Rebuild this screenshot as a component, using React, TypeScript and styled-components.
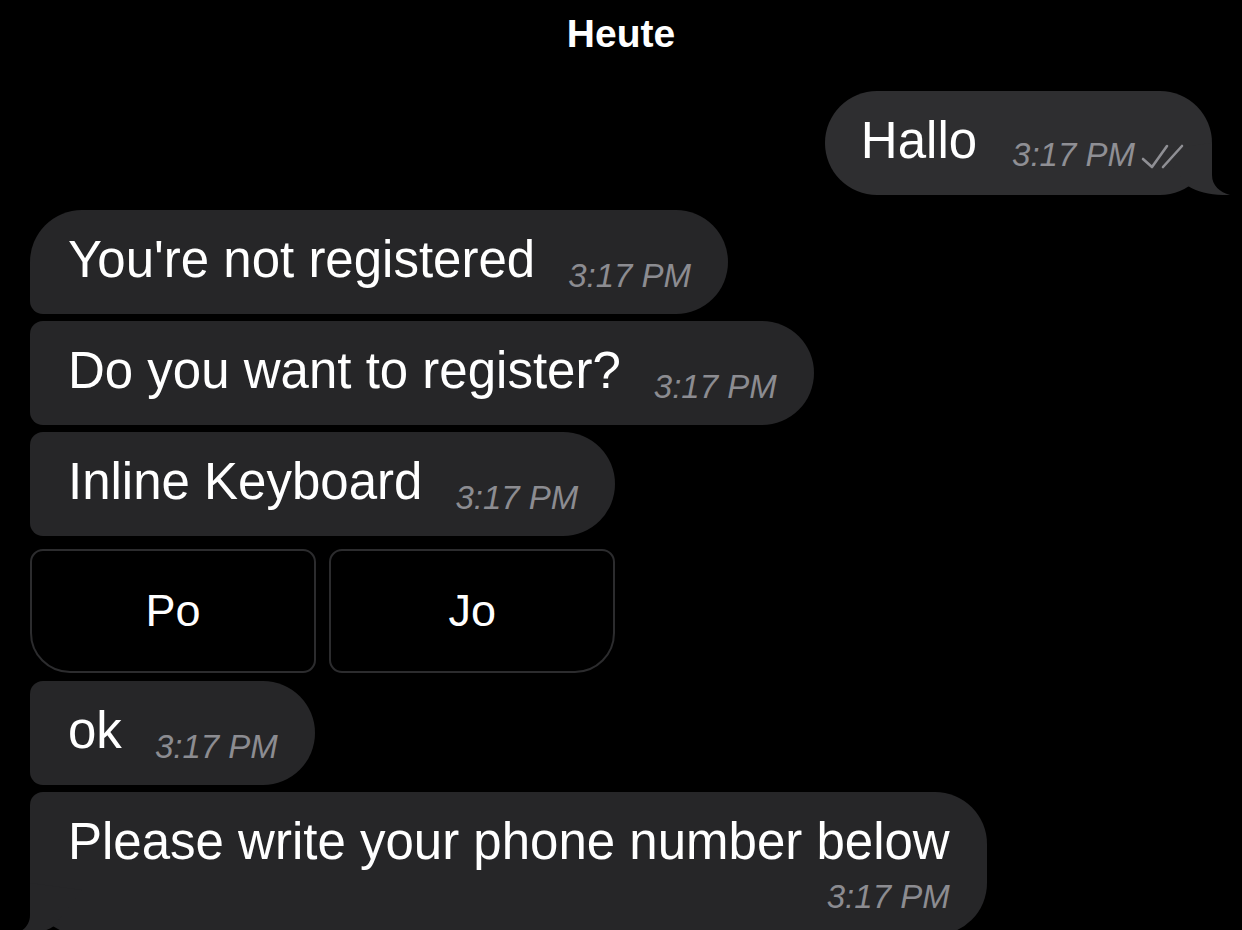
import React from "react";
import styled, { createGlobalStyle } from "styled-components";

const Global = createGlobalStyle`
  html, body {
    margin: 0;
    padding: 0;
    background: #000;
    height: 930px;
    overflow: hidden;
  }
  body {
    font-family: "Liberation Sans", Arial, sans-serif;
    color: #fff;
  }
`;

const IN_BG = "#262628";
const OUT_BG = "#2e2e30";

const Screen = styled.div`
  display: flex;
  flex-direction: column;
  padding: 10px 30px 0 30px;
  height: 930px;
  box-sizing: border-box;
  overflow: hidden;
`;

const DateHeader = styled.div`
  align-self: center;
  font-size: 39px;
  line-height: 47px;
  font-weight: 700;
  color: #fff;
`;

const Bubble = styled.div<{ $out?: boolean; $radius: string; $mt: number; $stacked?: boolean }>`
  position: relative;
  align-self: ${(p) => (p.$out ? "flex-end" : "flex-start")};
  display: flex;
  flex-direction: ${(p) => (p.$stacked ? "column" : "row")};
  align-items: flex-end;
  margin-top: ${(p) => p.$mt}px;
  padding: 20px ${(p) => (p.$out ? 28 : 37)}px ${(p) => (p.$stacked ? 22 : 24)}px
    ${(p) => (p.$out ? 36 : 38)}px;
  background: ${(p) => (p.$out ? OUT_BG : IN_BG)};
  border-radius: ${(p) => p.$radius};
`;

const MsgText = styled.span<{ $stacked?: boolean }>`
  position: relative;
  z-index: 1;
  font-size: 51px;
  line-height: 60px;
  white-space: nowrap;
  align-self: ${(p) => (p.$stacked ? "flex-start" : "auto")};
`;

const Time = styled.span<{ $out?: boolean; $stacked?: boolean }>`
  position: relative;
  z-index: 1;
  display: block;
  flex-shrink: 0;
  font-size: 33px;
  line-height: 33px;
  font-style: italic;
  color: ${(p) => (p.$out ? "#8f8f94" : "#8c8c91")};
  white-space: nowrap;
  margin-left: ${(p) => (p.$stacked ? 0 : p.$out ? 35 : 33)}px;
  margin-top: ${(p) => (p.$stacked ? 8 : 0)}px;
  margin-bottom: ${(p) => (p.$out || p.$stacked ? 0 : -2)}px;
`;

const CheckIcon = styled.svg`
  display: inline-block;
  width: 44px;
  height: 24px;
  margin-left: 5px;
  vertical-align: -2px;
  overflow: visible;
`;

const TailSvg = styled.svg<{ $side: "left" | "right" }>`
  position: absolute;
  z-index: 0;
  bottom: 0;
  ${(p) => (p.$side === "right" ? "right: -18px;" : "left: -18px; transform: scaleX(-1);")}
`;

const KeyboardGroup = styled.div<{ $mt: number }>`
  align-self: flex-start;
  display: flex;
  flex-direction: column;
  margin-top: ${(p) => p.$mt}px;
`;

const KeyboardRow = styled.div`
  display: grid;
  grid-template-columns: 1fr 1fr;
  gap: 13px;
  margin-top: 13px;
`;

const KeyButton = styled.button<{ $radius: string }>`
  height: 124px;
  background: #000;
  border: 2px solid #2c2c2e;
  border-radius: ${(p) => p.$radius};
  color: #fff;
  font-family: "Liberation Sans", Arial, sans-serif;
  font-size: 45px;
  font-weight: 400;
  display: flex;
  align-items: center;
  justify-content: center;
  padding: 0;
  cursor: pointer;
`;

const Tail: React.FC<{ side: "left" | "right"; color: string }> = ({ side, color }) => (
  <TailSvg $side={side} width="80" height="60" viewBox="0 0 80 60">
    <path d="M62 8 L62 40 C62 51 70 57 80 60 C65 60.5 48 58 38 51 L10 15 Z" fill={color} />
  </TailSvg>
);

const Checks = () => (
  <CheckIcon viewBox="0 0 44 24" fill="none">
    <path
      d="M3 15 L12 23 L27 2 M23 23 L42 2"
      stroke="#8f8f94"
      strokeWidth="2.6"
      strokeLinecap="round"
      strokeLinejoin="round"
    />
  </CheckIcon>
);

const R_PILL = "52px 52px 52px 52px";
const R_FIRST = "52px 52px 52px 13px";
const R_MID = "13px 52px 52px 13px";
const R_LAST = "13px 52px 52px 52px";

export default function App() {
  return (
    <>
      <Global />
      <Screen>
        <DateHeader>Heute</DateHeader>

        <Bubble $out $radius={R_PILL} $mt={34}>
          <Tail side="right" color={OUT_BG} />
          <MsgText>Hallo</MsgText>
          <Time $out>
            3:17 PM
            <Checks />
          </Time>
        </Bubble>

        <Bubble $radius={R_FIRST} $mt={15}>
          <MsgText>You're not registered</MsgText>
          <Time>3:17 PM</Time>
        </Bubble>

        <Bubble $radius={R_MID} $mt={7}>
          <MsgText>Do you want to register?</MsgText>
          <Time>3:17 PM</Time>
        </Bubble>

        <KeyboardGroup $mt={7}>
          <Bubble $radius={R_MID} $mt={0}>
            <MsgText>Inline Keyboard</MsgText>
            <Time>3:17 PM</Time>
          </Bubble>
          <KeyboardRow>
            <KeyButton $radius="13px 13px 13px 40px">Po</KeyButton>
            <KeyButton $radius="13px 13px 40px 13px">Jo</KeyButton>
          </KeyboardRow>
        </KeyboardGroup>

        <Bubble $radius={R_MID} $mt={8}>
          <MsgText>ok</MsgText>
          <Time>3:17 PM</Time>
        </Bubble>

        <Bubble $radius={R_LAST} $mt={7} $stacked>
          <Tail side="left" color={IN_BG} />
          <MsgText $stacked>Please write your phone number below</MsgText>
          <Time $stacked>3:17 PM</Time>
        </Bubble>
      </Screen>
    </>
  );
}
